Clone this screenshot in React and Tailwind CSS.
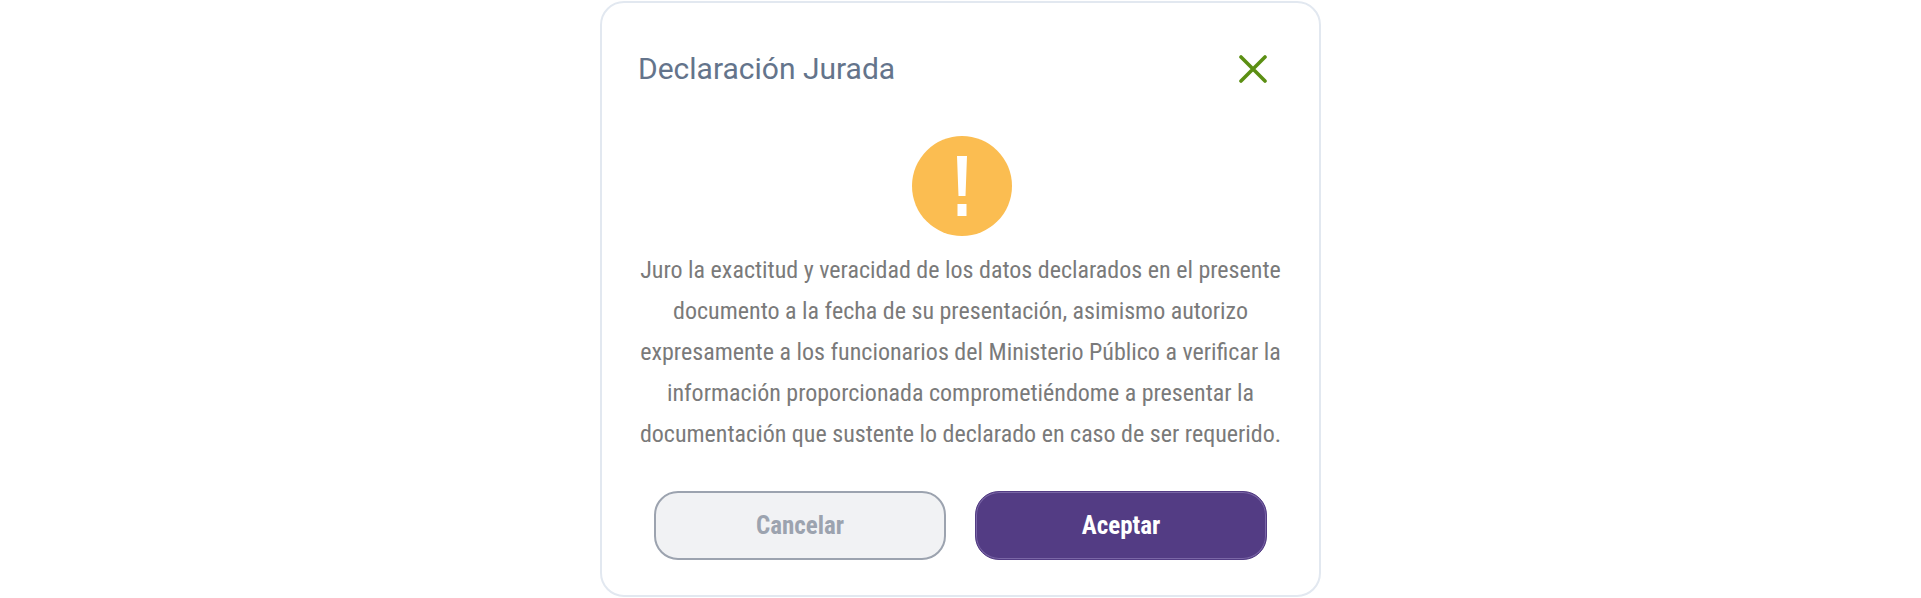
import React from 'react';

const LINES = [
  'Juro la exactitud y veracidad de los datos declarados en el presente',
  'documento a la fecha de su presentación, asimismo autorizo',
  'expresamente a los funcionarios del Ministerio Público a verificar la',
  'información proporcionada comprometiéndome a presentar la',
  'documentación que sustente lo declarado en caso de ser requerido.',
];

export default function App() {
  return (
    <div className="h-[598px] bg-white flex justify-center pt-px font-['Roboto',sans-serif]">
      <div className="w-[721px] h-[596px] border-2 border-[#e2e8f0] rounded-[24px] flex flex-col items-center">
        <div className="w-full h-[34px] flex items-center justify-between pl-9 pr-[52px] mt-[49px]">
          <h2 className="text-[30px] leading-[34px] text-[#64748b] font-normal">Declaración Jurada</h2>
          <svg width="28" height="28" viewBox="0 0 28 28" fill="none" stroke="#5b8f13" strokeWidth="3.6" strokeLinecap="round">
            <path d="M2 2 L26 26 M26 2 L2 26" />
          </svg>
        </div>
        <div className="w-[100px] h-[100px] rounded-full bg-[#fbbd51] mt-[50px] ml-[2px] flex items-center justify-center">
          <svg width="10" height="60" viewBox="0 0 10 60" fill="#fff">
            <path d="M0 0 H10 L8.5 40 H1.5 Z M0.5 48 H9.5 V60 H0.5 Z" />
          </svg>
        </div>
        <p className="mt-[14px] text-center text-[24px] leading-[41px] text-[#7a7a7a] [font-stretch:75%]">
          {LINES.map(line => (
            <span key={line} className="block whitespace-nowrap">{line}</span>
          ))}
        </p>
        <div className="flex gap-[29px] mt-[36px]">
          <button className="w-[292px] h-[69px] rounded-[24px] border-2 border-[#9ca3af] bg-[#f1f2f4] text-[#9ca3af] text-[25px] font-bold [font-stretch:75%]">Cancelar</button>
          <button className="w-[292px] h-[69px] rounded-[24px] border border-[#533c84] shadow-[inset_0_0_0_1px_#7a66a6] bg-[#533c84] text-white text-[25px] font-bold [font-stretch:75%]">Aceptar</button>
        </div>
      </div>
    </div>
  );
}
